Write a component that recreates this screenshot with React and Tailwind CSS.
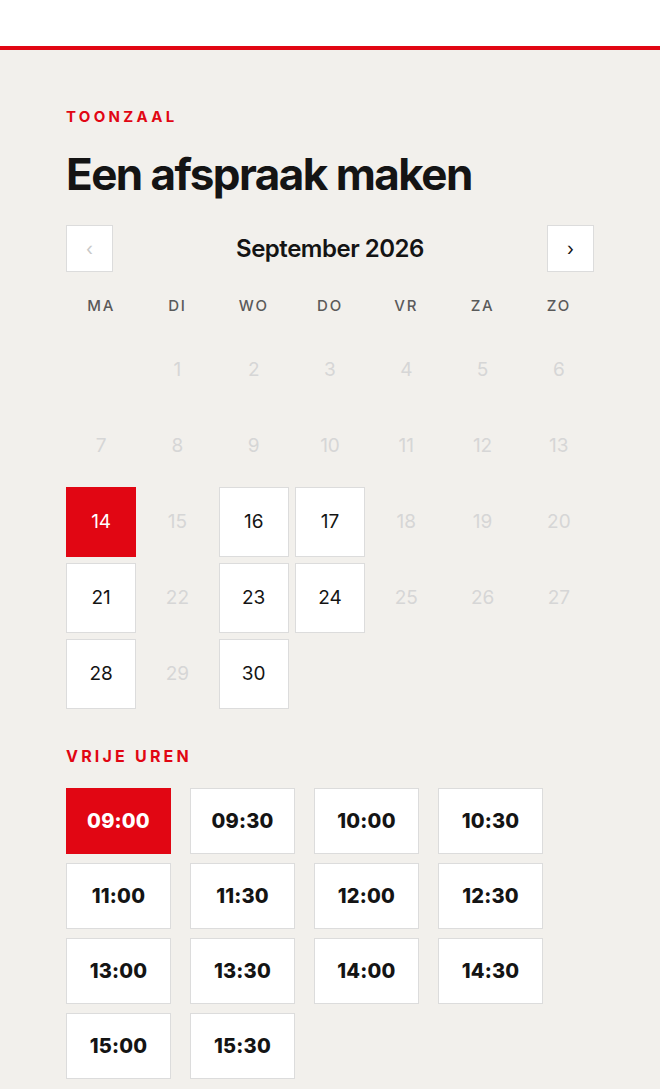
import React from 'react';

const weekdays = ['MA', 'DI', 'WO', 'DO', 'VR', 'ZA', 'ZO'];
const available = [16, 17, 21, 23, 24, 28, 30];
const selectedDay = 14;
const times = ['09:00', '09:30', '10:00', '10:30', '11:00', '11:30', '12:00', '12:30', '13:00', '13:30', '14:00', '14:30', '15:00', '15:30'];

const font = { fontFamily: 'Inter, "Liberation Sans", Arial, sans-serif' };

const App = () => {
    // September 2026 starts on a Tuesday
    const cells = [null, ...Array.from({ length: 30 }, (_, i) => i + 1)];

    return (
        <div className="min-h-screen bg-[#f2f0ec] text-[#141414]" style={font}>
            {/* Top bar */}
            <div className="h-[50px] bg-white border-b-4 border-[#e10613]" />

            <main className="px-[66px] pt-[59px] pb-10">
                <p className="text-[15px] font-bold tracking-[0.22em] text-[#e10613] leading-none">TOONZAAL</p>
                <h1 className="mt-[28px] text-[44px] font-bold tracking-[-0.035em] leading-none">Een afspraak maken</h1>

                {/* Month switcher */}
                <div className="mt-[29px] flex items-center justify-between">
                    <button className="w-[47px] h-[47px] bg-white border border-[#dcdcdc] flex items-center justify-center text-[18px] text-[#c8c8c8]">‹</button>
                    <span className="text-[24px] font-semibold tracking-[-0.02em]">September 2026</span>
                    <button className="w-[47px] h-[47px] bg-white border border-[#dcdcdc] flex items-center justify-center text-[18px] text-[#141414]">›</button>
                </div>

                {/* Weekdays */}
                <div className="mt-[26px] grid grid-cols-7 gap-x-[6px]">
                    {weekdays.map((d) => (
                        <div key={d} className="text-center text-[15px] font-medium tracking-[0.12em] text-[#5a5a5a] leading-none">{d}</div>
                    ))}
                </div>

                {/* Days */}
                <div className="mt-[22px] grid grid-cols-7 gap-[6px] auto-rows-[70px]">
                    {cells.map((day, i) => {
                        if (!day) return <div key={`e${i}`} />;
                        if (day === selectedDay) {
                            return (
                                <div key={day} className="bg-[#e10613] text-white flex items-center justify-center text-[19px]">{day}</div>
                            );
                        }
                        if (available.includes(day)) {
                            return (
                                <div key={day} className="bg-white border border-[#dcdcdc] flex items-center justify-center text-[19px]">{day}</div>
                            );
                        }
                        return (
                            <div key={day} className="flex items-center justify-center text-[19px] text-[#d6d6d6]">{day}</div>
                        );
                    })}
                </div>

                <p className="mt-[39px] text-[16px] font-bold tracking-[0.2em] text-[#e10613] leading-none">VRIJE UREN</p>

                {/* Time slots */}
                <div className="mt-[24px] grid grid-cols-[repeat(4,105px)] gap-x-[19px] gap-y-[9px]">
                    {times.map((t, i) => (
                        <div
                            key={t}
                            className={`h-[66px] flex items-center justify-center text-[20px] font-extrabold tracking-[0.01em] ${i === 0 ? 'bg-[#e10613] text-white' : 'bg-white border border-[#dcdcdc]'}`}
                        >
                            {t}
                        </div>
                    ))}
                </div>
            </main>
        </div>
    );
};

export default App;
